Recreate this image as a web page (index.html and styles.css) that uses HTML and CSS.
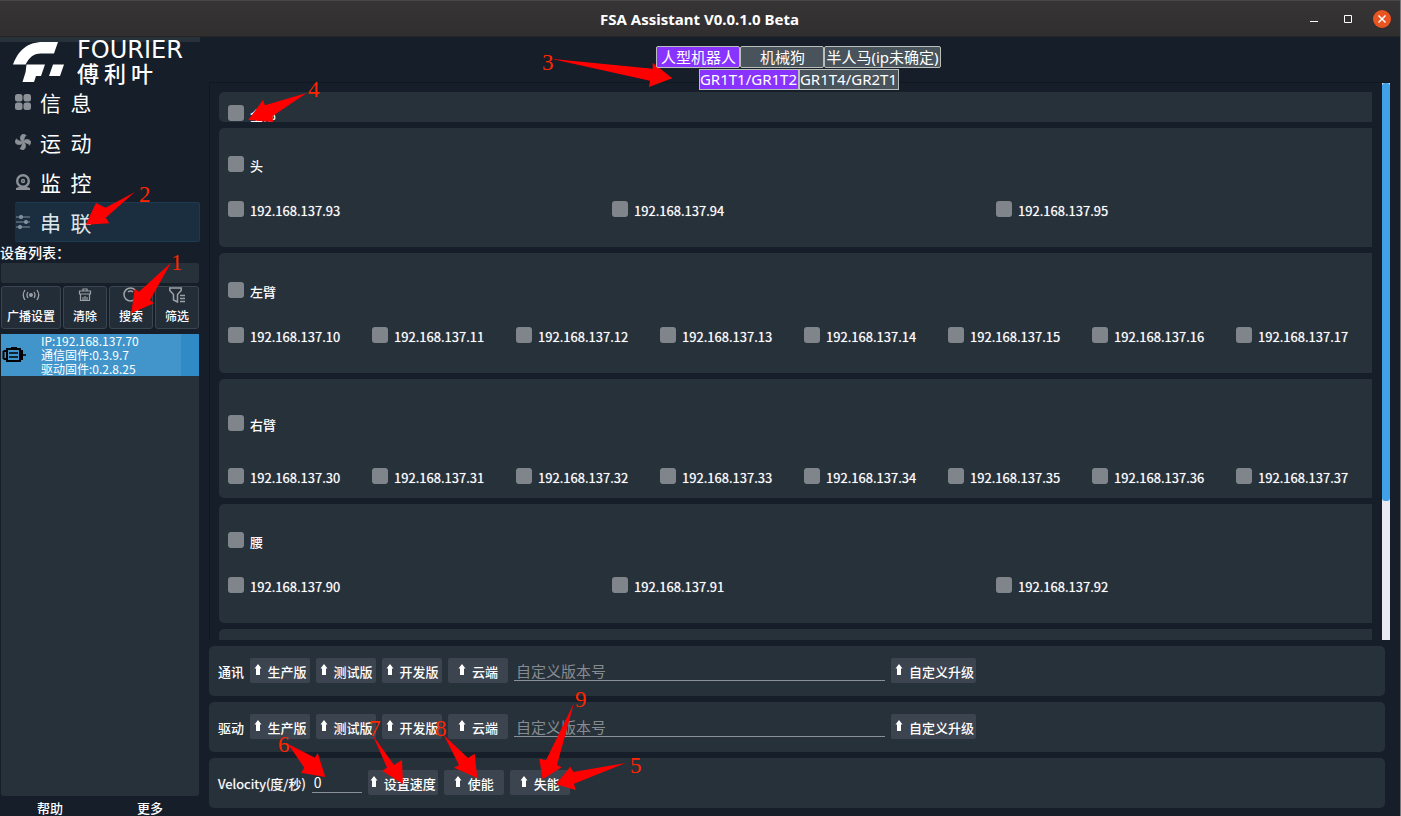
FILE: index.html
```
<!DOCTYPE html>
<html lang="zh-CN">
<head>
<meta charset="utf-8">
<title>FSA Assistant V0.0.1.0 Beta</title>
<link rel="stylesheet" href="styles.css">
</head>
<body>
<svg class="defs" width="0" height="0" aria-hidden="true">
  <symbol id="up" viewBox="0 0 8 12"><path fill="#fff" d="M4 0 7.500 4.500H6V11H2V4.500H.5Z"/></symbol>
</svg>
<div class="window">
  <header class="titlebar">
    <h1 class="title">FSA Assistant V0.0.1.0 Beta</h1>
    <div class="controls">
      <button class="ctl" aria-label="最小化"><svg width="18" height="18"><path d="M5 11.500h8" stroke="#fff"/></svg></button>
      <button class="ctl" aria-label="最大化"><svg width="18" height="18"><path d="M5.500 5.500h7v7h-7z" fill="none" stroke="#fff"/></svg></button>
      <button class="ctl" aria-label="关闭"><svg width="18" height="18"><circle cx="9" cy="9" r="9" fill="#e95420"/><path d="M5.500 5.500l7 7M12.500 5.500l-7 7" stroke="#fff" stroke-width="1.500"/></svg></button>
    </div>
  </header>
  <div class="body">
    <aside class="sidebar">
      <div class="strip"></div>
      <div class="logo">
        <svg class="mark" width="52" height="40" viewBox="0 0 52 40"><g fill="#fff"><path d="M12.600 22.600H0C5 9 14 0 30 0H45L41 11.500H28C20 11.500 16 16 12.600 22.600Z"/><path d="M13.500 22.600H32L28 34H23L21 40H9.500L12.600 30Z"/><path d="M40 22.600H51L47 34H36Z"/></g></svg>
        <div class="brand"><span class="brand-en">FOURIER</span><span class="brand-cn">傅 利 叶</span></div>
      </div>
      <nav class="nav">
        <a href="#info"><svg width="16" height="16" fill="#8c9197"><rect width="7.500" height="7.500" rx="2.500"/><rect x="8.500" width="7.500" height="7.500" rx="2.500"/><rect y="8.500" width="7.500" height="7.500" rx="2.500"/><rect x="8.500" y="8.500" width="7.500" height="7.500" rx="2.500"/></svg>信  息</a>
        <a href="#motion"><svg width="16" height="16" viewBox="0 0 16 16" fill="#8c9197" stroke="#8c9197" stroke-width=".8"><path d="M8 8C5 6.500 4.500 3 7 .5 8.500 0 10.500.5 11 1.500 9 3 9 5.500 8 8Z"/><path d="M8 8C9.500 5 13 4.500 15.500 7 16 8.500 15.500 10.500 14.500 11 13 9 10.500 9 8 8Z"/><path d="M8 8C11 9.500 11.500 13 9 15.500 7.500 16 5.500 15.500 5 14.500 7 13 7 10.500 8 8Z"/><path d="M8 8C6.500 11 3 11.500.5 9 0 7.500.5 5.500 1.500 5 3 7 5.500 7 8 8Z"/></svg>运  动</a>
        <a href="#monitor"><svg width="16" height="16" viewBox="0 0 16 16"><circle cx="8" cy="7" r="5.800" fill="none" stroke="#8c9197" stroke-width="2.400"/><circle cx="8" cy="7" r="2.200" fill="#8c9197"/><circle cx="8" cy="7" r=".8" fill="#333c46"/><path d="M4 13h8l3 1v2H1v-2z" fill="#8c9197"/></svg>监  控</a>
        <a href="#series" class="active"><svg width="16" height="16" viewBox="0 0 16 16" fill="#7f909c" stroke="#7f909c"><path d="M1 3h14M1 8h14M1 13h14" stroke-width="1.200"/><circle cx="6" cy="3" r="1.700"/><circle cx="11" cy="8" r="1.700"/><circle cx="5" cy="13" r="1.700"/></svg>串  联</a>
      </nav>
      <label class="list-label" for="filter">设备列表：</label>
      <input class="filter" id="filter" type="text">
      <div class="tools">
        <button class="wide"><svg width="18" height="16" viewBox="0 0 18 16" fill="none" stroke="#9da2a7" stroke-width="1.300"><circle cx="9" cy="8" r="1.300" fill="#9da2a7"/><path d="M6 5q-2 3 0 6M12 5q2 3 0 6M3 3q-3.500 5 0 10M15 3q3.500 5 0 10"/></svg>广播设置</button>
        <button><svg width="16" height="16" viewBox="0 0 16 16" fill="none" stroke="#9da2a7" stroke-width="1.200"><path d="M3.500 7V13.500h9V7M2.500 4h11v3h-11zM6 4V2h4v2M6 10v3M8 9v4M10 10v3"/></svg>清除</button>
        <button><svg width="16" height="16" viewBox="0 0 16 16" fill="none" stroke="#9da2a7" stroke-width="1.500"><circle cx="7.500" cy="7.500" r="6.500"/><path d="M5 5q2.500-2 5 0M12.500 12.500l3 3"/></svg>搜索</button>
        <button><svg width="16" height="16" viewBox="0 0 16 16" fill="none" stroke="#9da2a7" stroke-width="1.500"><path d="M.8 1h11.400v2.500L8.500 7.500V15l-4-2V7.500L.8 3.500zM11 8.500h5M11 11.500h5M11 14.500h5"/></svg>筛选</button>
      </div>
      <ul class="devices">
        <li class="device">
          <svg width="24" height="18" viewBox="0 0 24 18" fill="none" stroke="#000" stroke-width="2"><path d="M5 3h13v12H5zM9 2h6M1.500 5v8M1.500 5H5M1.500 13H5M20 4v10"/><path d="M20 9h4M7 7h9M7 11h9" stroke-width="1.500"/></svg>
          <p>IP:192.168.137.70<br>通信固件:0.3.9.7<br>驱动固件:0.2.8.25</p>
        </li>
      </ul>
      <footer class="foot"><button>帮助</button><button>更多</button></footer>
    </aside>
    <main class="main">
      <div class="tabs">
        <div class="tabrow"><button class="on">人型机器人</button><button>机械狗</button><button>半人马(ip未确定)</button></div>
        <div class="tabrow sub"><button class="on">GR1T1/GR1T2</button><button>GR1T4/GR2T1</button></div>
      </div>
      <div class="scroller">
        <div class="viewport">
          <div class="groups">
            <section class="card all"><label class="check"><input type="checkbox">全部</label></section>
            <section class="card">
              <label class="check"><input type="checkbox">头</label>
              <div class="grid three">
                <label class="check"><input type="checkbox">192.168.137.93</label>
                <label class="check"><input type="checkbox">192.168.137.94</label>
                <label class="check"><input type="checkbox">192.168.137.95</label>
              </div>
            </section>
            <section class="card tall">
              <label class="check"><input type="checkbox">左臂</label>
              <div class="grid eight">
                <label class="check"><input type="checkbox">192.168.137.10</label>
                <label class="check"><input type="checkbox">192.168.137.11</label>
                <label class="check"><input type="checkbox">192.168.137.12</label>
                <label class="check"><input type="checkbox">192.168.137.13</label>
                <label class="check"><input type="checkbox">192.168.137.14</label>
                <label class="check"><input type="checkbox">192.168.137.15</label>
                <label class="check"><input type="checkbox">192.168.137.16</label>
                <label class="check"><input type="checkbox">192.168.137.17</label>
              </div>
            </section>
            <section class="card roomy">
              <label class="check"><input type="checkbox">右臂</label>
              <div class="grid eight">
                <label class="check"><input type="checkbox">192.168.137.30</label>
                <label class="check"><input type="checkbox">192.168.137.31</label>
                <label class="check"><input type="checkbox">192.168.137.32</label>
                <label class="check"><input type="checkbox">192.168.137.33</label>
                <label class="check"><input type="checkbox">192.168.137.34</label>
                <label class="check"><input type="checkbox">192.168.137.35</label>
                <label class="check"><input type="checkbox">192.168.137.36</label>
                <label class="check"><input type="checkbox">192.168.137.37</label>
              </div>
            </section>
            <section class="card">
              <label class="check"><input type="checkbox">腰</label>
              <div class="grid three">
                <label class="check"><input type="checkbox">192.168.137.90</label>
                <label class="check"><input type="checkbox">192.168.137.91</label>
                <label class="check"><input type="checkbox">192.168.137.92</label>
              </div>
            </section>
            <section class="card"></section>
          </div>
        </div>
        <div class="track"><div class="thumb"></div></div>
      </div>
      <section class="panel">
        <label for="comm">通讯</label>
        <button class="btn"><svg class="up"><use href="#up"/></svg>生产版</button>
        <button class="btn"><svg class="up"><use href="#up"/></svg>测试版</button>
        <button class="btn"><svg class="up"><use href="#up"/></svg>开发版</button>
        <button class="btn"><svg class="up"><use href="#up"/></svg>云端</button>
        <input class="line version" id="comm" type="text" placeholder="自定义版本号">
        <button class="btn"><svg class="up"><use href="#up"/></svg>自定义升级</button>
      </section>
      <section class="panel">
        <label for="drive">驱动</label>
        <button class="btn"><svg class="up"><use href="#up"/></svg>生产版</button>
        <button class="btn"><svg class="up"><use href="#up"/></svg>测试版</button>
        <button class="btn"><svg class="up"><use href="#up"/></svg>开发版</button>
        <button class="btn"><svg class="up"><use href="#up"/></svg>云端</button>
        <input class="line version" id="drive" type="text" placeholder="自定义版本号">
        <button class="btn"><svg class="up"><use href="#up"/></svg>自定义升级</button>
      </section>
      <section class="panel">
        <label class="latin" for="velocity">Velocity(度/秒)</label>
        <input class="line speed" id="velocity" type="text" value="0">
        <button class="btn"><svg class="up"><use href="#up"/></svg>设置速度</button>
        <button class="btn"><svg class="up"><use href="#up"/></svg>使能</button>
        <button class="btn"><svg class="up"><use href="#up"/></svg>失能</button>
      </section>
    </main>
  </div>
</div>
<svg class="notes" width="700" height="816" viewBox="0 0 700 816">
  <g fill="#f00">
    <path d="M171 262.700 139 291.700 134.700 288.700 131.300 313.300 154 303.300 150 300Z"/>
    <path d="M135 192 105.600 207.700 96 203 85.700 224.700 109.300 223.300 105.700 217.700Z"/>
    <path d="M550.700 58.700 652.700 68.700V62.700L672.300 78.300 649 87 650 80.700Z"/>
    <path d="M306.700 93 265 105.300 263 100 248.300 120 273.300 122 272.300 116.300Z"/>
    <path d="M625.700 763 573.300 772 570.300 766.700 556 784.300 575.700 790 574 783.700Z"/>
    <path d="M288 744 315 757.700 317.700 753 325.300 777 301 772.700 304.300 767.700Z"/>
    <path d="M372.700 735 394 765 402 760 403 784 382 770.700 387 767.700Z"/>
    <path d="M443.700 735 468 758 474.700 753.700 477.300 778 454 767.700 459 765Z"/>
    <path d="M574 703 557 765 561.700 767.300 542.700 779.300 539.300 758.700 546 760.300Z"/>
  </g>
  <g class="nums">
    <text x="171" y="270">1</text><text x="139" y="202">2</text><text x="542" y="70">3</text>
    <text x="308" y="97">4</text><text x="630" y="773">5</text><text x="278" y="752">6</text>
    <text x="369" y="736">7</text><text x="435" y="736">8</text><text x="575" y="707">9</text>
  </g>
</svg>
</body>
</html>
```
FILE: styles.css
```
* { box-sizing: border-box; }
body {
  margin: 0;
  background: #151e29;
  color: #fff;
  font: 500 13px/16px "Noto Sans CJK SC", sans-serif;
}
button, input { font: inherit; color: inherit; margin: 0; padding: 0; border: 0; background: none; }
.defs { position: absolute; }
.window { display: flex; flex-direction: column; height: 100vh; overflow: hidden; border-right: 1px solid #77797c; }
.titlebar {
  display: grid; grid-template-columns: 1fr auto 1fr; align-items: center;
  height: 37px; flex: none; padding-right: 9px;
  background: linear-gradient(#373435, #302e2e);
  border-top: 1px solid #484646; border-bottom: 1px solid #262424;
}
.title { grid-column: 2; margin: 0; padding-left: 8px; font: 700 15px/20px "Noto Sans", sans-serif; }
.controls { display: flex; justify-content: flex-end; gap: 16px; }
.ctl { width: 18px; height: 18px; }
.ctl svg { display: block; }
.body { display: flex; flex: 1; min-height: 0; }

.sidebar { display: flex; flex-direction: column; width: 200px; flex: none; }
.strip { height: 5px; background: #27313a; }
.logo { display: flex; gap: 12px; height: 40px; padding-left: 13px; }
.mark { flex: none; }
.brand { display: flex; flex-direction: column; white-space: nowrap; }
.brand-en { font: 24px/16px "DejaVu Sans", sans-serif; }
.brand-cn { font-size: 22px; line-height: 28px; }
.nav { display: flex; flex-direction: column; padding-left: 15px; }
.nav a {
  display: flex; align-items: center; gap: 9px; height: 40px;
  border: 1px solid transparent; border-left: 0; border-radius: 2px;
  color: #fff; font-size: 21px; font-weight: 400; line-height: 36px;
  text-decoration: none; white-space: pre;
}
.nav .active { background: #1a2e3f; border-color: #1d3a50; color: #dfe6ea; }
.list-label { font-size: 14px; line-height: 20px; }
.filter { height: 20px; margin: 1px 1px 3px; padding: 0 4px; background: #27313a; border-radius: 2px; }
.tools { display: flex; gap: 2px; padding: 0 1px; }
.tools button {
  display: flex; flex-direction: column; align-items: center; gap: 5px;
  flex: 1; height: 43px;
  background: #232d37; border: 1px solid #3b454f; border-radius: 3px;
  font-size: 12px; line-height: 16px; white-space: nowrap;
}
.tools .wide { flex: none; width: 60px; }
.tools svg { flex: none; }
.devices { flex: 1; margin: 5px 1px 0; padding: 0; list-style: none; background: #27313a; border-radius: 3px; }
.device {
  display: flex; align-items: center; gap: 15px; height: 42px; padding-left: 1px;
  background: #4195cb; border-right: 18px solid #2f8ac6;
  font-size: 12px; font-weight: 400; line-height: 14px;
}
.device p { margin: 0; white-space: nowrap; }
.foot { display: flex; height: 20px; }
.foot button { flex: 1; line-height: 24px; }

.main { display: flex; flex-direction: column; flex: 1; min-width: 0; padding: 9px 10px 8px 9px; }
.tabs { display: flex; flex-direction: column; align-items: center; gap: 1px; position: relative; z-index: 1; padding-right: 2px; }
.tabrow { display: flex; }
.tabrow button {
  height: 22px; min-width: 84px; padding: 0 1px;
  border: 1px solid #b9beb9; border-radius: 2px; background: #49535c;
  font: 400 15px/20px "Noto Sans", "Noto Sans CJK SC", sans-serif;
}
.sub button { height: 21px; line-height: 19px; min-width: 100px; padding: 0; border-radius: 0; }
.tabrow .on { background: #8833ff; }
.scroller {
  display: flex; gap: 10px; flex: 1; min-height: 0; margin-top: -8px;
  border-top: 1px solid #0f171f; border-left: 1px solid #0f171f;
}
.viewport { flex: 1; min-width: 0; overflow: hidden; padding: 9px 0 0; margin-left: 9px; }
.groups { display: flex; flex-direction: column; gap: 6px; width: calc(100% + 8px); }
.card {
  display: flex; flex-direction: column; gap: 29px; flex: none;
  min-height: 119px; padding: 28px 0 0 9px;
  background: #27313a; border-radius: 5px;
}
.card.tall { min-height: 120px; padding-top: 29px; }
.card.roomy { padding-top: 36px; gap: 37px; }
.card.all { min-height: 0; height: 30px; padding-top: 13px; overflow: hidden; }
.grid { display: grid; font-weight: 400; text-shadow: 0 0 1px rgba(255, 255, 255, .6); }
.three { grid-template-columns: repeat(3, 1fr); }
.eight { grid-template-columns: repeat(8, 1fr); }
.check { display: flex; align-items: flex-start; gap: 6px; height: 16px; line-height: 20px; white-space: nowrap; }
.check input { appearance: none; width: 16px; height: 16px; border-radius: 3px; background: #80858b; }
.track { width: 8px; background: #e9ebf0; }
.thumb { height: 75%; background: #40a0e8; border-radius: 3px; }

.panel {
  display: flex; align-items: center; gap: 6px; flex: none;
  height: 50px; margin: 6px 5px 0 0; padding: 0 9px 1px;
  background: #27313a; border-radius: 5px;
}
.panel label { line-height: 20px; padding-top: 2px; }
.panel .latin { font-weight: 400; text-shadow: 0 0 1px rgba(255, 255, 255, .6); }
.btn {
  display: flex; align-items: center; justify-content: center; gap: 6px;
  height: 25px; min-width: 60px; padding: 2px 2px 0;
  background: #3c444f; border-radius: 2px; white-space: nowrap;
}
.version + .btn { padding: 2px 2px 0 4px; }
.up { width: 8px; height: 12px; margin-bottom: 4px; flex: none; }
.line { height: 21px; padding: 0 2px; border-bottom: 1px solid #8b9096; outline: 0; }
.version { flex: 0 1 371px; font-size: 15px; font-weight: 400; }
.version::placeholder { color: #868b91; opacity: 1; }
.speed { width: 50px; font-size: 14px; font-weight: 400; }
.notes { position: absolute; left: 0; top: 0; pointer-events: none; }
.nums { fill: #ff2600; font: 23px "Liberation Serif", serif; }
```
